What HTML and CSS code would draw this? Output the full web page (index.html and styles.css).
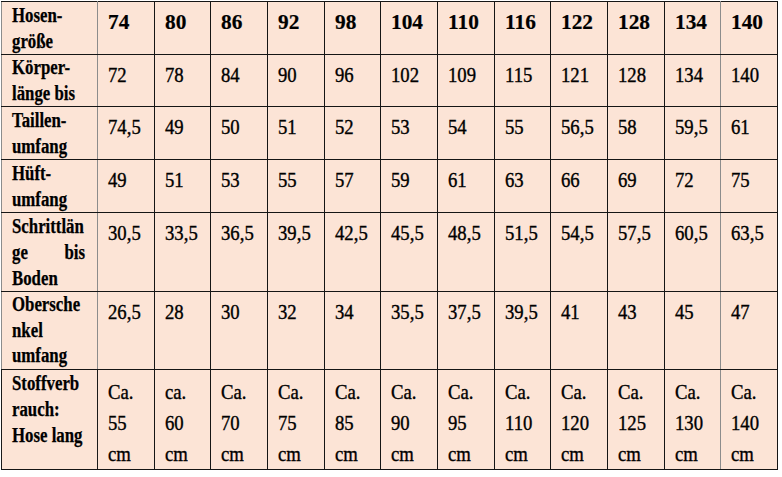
FILE: index.html
```
<!DOCTYPE html>
<html lang="de">
<head>
<meta charset="utf-8">
<title>Hosengrößen</title>
<link rel="stylesheet" href="styles.css">
</head>
<body>
<table class="sizes">
  <tr class="r1">
    <td class="lab"><div class="t">Hosen-<br>größe</div></td>
    <td class="num head"><div class="n">74</div></td>
    <td class="num head"><div class="n">80</div></td>
    <td class="num head"><div class="n">86</div></td>
    <td class="num head"><div class="n">92</div></td>
    <td class="num head"><div class="n">98</div></td>
    <td class="num head"><div class="n">104</div></td>
    <td class="num head"><div class="n">110</div></td>
    <td class="num head"><div class="n">116</div></td>
    <td class="num head"><div class="n">122</div></td>
    <td class="num head"><div class="n">128</div></td>
    <td class="num head"><div class="n">134</div></td>
    <td class="num head"><div class="n">140</div></td>
  </tr>
  <tr class="r2">
    <td class="lab"><div class="t">Körper-<br>länge bis</div></td>
    <td class="num"><div class="n">72</div></td>
    <td class="num"><div class="n">78</div></td>
    <td class="num"><div class="n">84</div></td>
    <td class="num"><div class="n">90</div></td>
    <td class="num"><div class="n">96</div></td>
    <td class="num"><div class="n">102</div></td>
    <td class="num"><div class="n">109</div></td>
    <td class="num"><div class="n">115</div></td>
    <td class="num"><div class="n">121</div></td>
    <td class="num"><div class="n">128</div></td>
    <td class="num"><div class="n">134</div></td>
    <td class="num"><div class="n">140</div></td>
  </tr>
  <tr class="r3">
    <td class="lab"><div class="t">Taillen-<br>umfang</div></td>
    <td class="num"><div class="n">74,5</div></td>
    <td class="num"><div class="n">49</div></td>
    <td class="num"><div class="n">50</div></td>
    <td class="num"><div class="n">51</div></td>
    <td class="num"><div class="n">52</div></td>
    <td class="num"><div class="n">53</div></td>
    <td class="num"><div class="n">54</div></td>
    <td class="num"><div class="n">55</div></td>
    <td class="num"><div class="n">56,5</div></td>
    <td class="num"><div class="n">58</div></td>
    <td class="num"><div class="n">59,5</div></td>
    <td class="num"><div class="n">61</div></td>
  </tr>
  <tr class="r4">
    <td class="lab"><div class="t">Hüft-<br>umfang</div></td>
    <td class="num"><div class="n">49</div></td>
    <td class="num"><div class="n">51</div></td>
    <td class="num"><div class="n">53</div></td>
    <td class="num"><div class="n">55</div></td>
    <td class="num"><div class="n">57</div></td>
    <td class="num"><div class="n">59</div></td>
    <td class="num"><div class="n">61</div></td>
    <td class="num"><div class="n">63</div></td>
    <td class="num"><div class="n">66</div></td>
    <td class="num"><div class="n">69</div></td>
    <td class="num"><div class="n">72</div></td>
    <td class="num"><div class="n">75</div></td>
  </tr>
  <tr class="r5">
    <td class="lab"><div class="t">Schrittlän<br><span class="just"><span>ge</span><span>bis</span></span>Boden</div></td>
    <td class="num"><div class="n">30,5</div></td>
    <td class="num"><div class="n">33,5</div></td>
    <td class="num"><div class="n">36,5</div></td>
    <td class="num"><div class="n">39,5</div></td>
    <td class="num"><div class="n">42,5</div></td>
    <td class="num"><div class="n">45,5</div></td>
    <td class="num"><div class="n">48,5</div></td>
    <td class="num"><div class="n">51,5</div></td>
    <td class="num"><div class="n">54,5</div></td>
    <td class="num"><div class="n">57,5</div></td>
    <td class="num"><div class="n">60,5</div></td>
    <td class="num"><div class="n">63,5</div></td>
  </tr>
  <tr class="r6">
    <td class="lab"><div class="t">Obersche<br>nkel<br>umfang</div></td>
    <td class="num"><div class="n">26,5</div></td>
    <td class="num"><div class="n">28</div></td>
    <td class="num"><div class="n">30</div></td>
    <td class="num"><div class="n">32</div></td>
    <td class="num"><div class="n">34</div></td>
    <td class="num"><div class="n">35,5</div></td>
    <td class="num"><div class="n">37,5</div></td>
    <td class="num"><div class="n">39,5</div></td>
    <td class="num"><div class="n">41</div></td>
    <td class="num"><div class="n">43</div></td>
    <td class="num"><div class="n">45</div></td>
    <td class="num"><div class="n">47</div></td>
  </tr>
  <tr class="r7">
    <td class="lab"><div class="t">Stoffverb<br>rauch:<br>Hose lang</div></td>
    <td class="num"><div class="n">Ca.<br>55<br>cm</div></td>
    <td class="num"><div class="n">ca.<br>60<br>cm</div></td>
    <td class="num"><div class="n">Ca.<br>70<br>cm</div></td>
    <td class="num"><div class="n">Ca.<br>75<br>cm</div></td>
    <td class="num"><div class="n">Ca.<br>85<br>cm</div></td>
    <td class="num"><div class="n">Ca.<br>90<br>cm</div></td>
    <td class="num"><div class="n">Ca.<br>95<br>cm</div></td>
    <td class="num"><div class="n">Ca.<br>110<br>cm</div></td>
    <td class="num"><div class="n">Ca.<br>120<br>cm</div></td>
    <td class="num"><div class="n">Ca.<br>125<br>cm</div></td>
    <td class="num"><div class="n">Ca.<br>130<br>cm</div></td>
    <td class="num"><div class="n">Ca.<br>140<br>cm</div></td>
  </tr>
</table>
</body>
</html>
```
FILE: styles.css
```
html, body {
  margin: 0;
  padding: 0;
  background: #ffffff;
}

body {
  padding: 1px 0 0 1px;
  font-family: "Liberation Serif", "DejaVu Serif", serif;
  color: #000;
}

.sizes {
  border-collapse: collapse;
  table-layout: fixed;
  width: 777px;
  background: #fce4d6;
  font-family: "Liberation Serif", "DejaVu Serif", serif;
}

.sizes td {
  border: 1px solid #151515;
  vertical-align: top;
  padding: 0 0 0 10px;
  overflow: visible;
}

.sizes td.lab {
  width: 85px;
  border-left-color: #8c8c8c;
  border-right-color: #8c8c8c;
  font-weight: bold;
  font-size: 20px;
  line-height: 26px;
  padding-top: 0;
}

.sizes tr.r2 td.lab {
  line-height: 25.5px;
}

.sizes tr.r6 td.lab {
  line-height: 25.6px;
}

.sizes tr.r7 td.lab {
  border-left-color: #1a1a1a;
  border-right-color: #1a1a1a;
}

.sizes td:nth-child(12) {
  border-right-color: #8c8c8c;
}

.sizes td.num {
  font-size: 22px;
  line-height: 31px;
  padding-top: 4px;
}

.sizes tr.r7 td.num {
  line-height: 31px;
  padding-top: 6px;
}

.sizes td.head {
  font-weight: bold;
}

.t {
  transform: scaleX(0.84);
  transform-origin: 0 0;
  white-space: nowrap;
  -webkit-text-stroke: 0.25px #000;
}

.n {
  transform: scaleX(0.85);
  transform-origin: 0 0;
  white-space: nowrap;
  -webkit-text-stroke: 0.4px #000;
}

.head .n {
  transform: scaleX(0.97);
  -webkit-text-stroke: 0.2px #000;
}

.just {
  display: flex;
  justify-content: space-between;
  width: 87px;
}
```
